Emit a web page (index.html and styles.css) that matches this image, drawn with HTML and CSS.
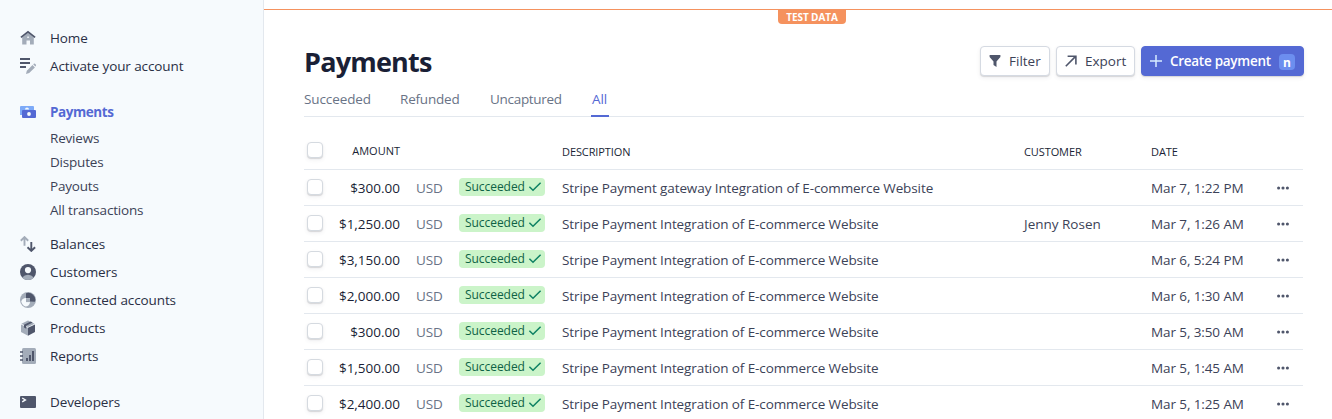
FILE: index.html
```html
<!DOCTYPE html>
<html lang="en">
<head>
<meta charset="utf-8">
<title>Payments</title>
<link rel="stylesheet" href="styles.css">
</head>
<body>
<svg class="defs" width="0" height="0">
  <symbol id="check" viewBox="0 0 14 10"><path d="M1.400 4.800 5 8.300 12.600 .8" fill="none" stroke="#0e8163" stroke-width="1.500"/></symbol>
  <symbol id="dots" viewBox="0 0 12 4"><g fill="#4f566b"><circle cx="1.6" cy="2" r="1.55"/><circle cx="6" cy="2" r="1.55"/><circle cx="10.4" cy="2" r="1.55"/></g></symbol>
</svg>
<div class="app">
  <nav class="sidebar">
    <a class="item"><svg viewBox="0 0 16 16"><path d="M2.200 7.200 8 2.600l5.800 4.600V14.500H10V10.500H6.500V14.500H2.200z" fill="#a3acb9"/><path d="M.9 7.400 8 1.900l7.100 5.500" fill="none" stroke="#4f566b" stroke-width="1.700"/><path d="M7.300 6.500h1.500v1.600H7.300z" fill="#f6fafd"/></svg><span>Home</span></a>
    <a class="item"><svg viewBox="0 0 16 16"><path d="M0 0h10v2H0zM0 4h10v2H0zM0 8h6v2H0z" fill="#4f566b"/><path d="M6 16l.8-3.300L12.500 7l2.400 2.400-5.700 5.700zM13.200 6.300l.6-.6q.6-.4 1.200.1l.8.800q.5.600 0 1.300l-.5.600z" fill="#a3acb9"/></svg><span>Activate your account</span></a>
    <a class="item active"><svg viewBox="0 0 16 16"><path d="M0 3q0-1 1-1h12q1 0 1 1v8H0z" fill="#7daaf8"/><path d="M5 5.500a2 2 0 0 1 4 0z" fill="#f6fafd"/><rect x="2" y="6" width="14" height="8" rx="1" fill="#5469d4"/><circle cx="9" cy="10" r="1.900" fill="#f6fafd"/></svg><span>Payments</span></a>
    <div class="sub">
      <a>Reviews</a><a>Disputes</a><a>Payouts</a><a>All transactions</a>
    </div>
    <a class="item"><svg viewBox="0 0 16 16"><path d="M4.500 9.800V1.500M.8 4.700l3.700-3.600 3.700 3.600" fill="none" stroke="#a3acb9" stroke-width="1.900"/><path d="M11.300 6v8.500M7.500 11.300l3.800 3.600 3.800-3.600" fill="none" stroke="#4f566b" stroke-width="1.900"/></svg><span>Balances</span></a>
    <a class="item"><svg viewBox="0 0 16 16"><circle cx="8" cy="8" r="8" fill="#4f566b"/><circle cx="8" cy="6.100" r="3.100" fill="#f6fafd"/><path d="M2.100 13.400Q4.500 10.800 8 10.800t5.900 2.600A8 8 0 0 1 2.100 13.400z" fill="#a3acb9"/></svg><span>Customers</span></a>
    <a class="item"><svg viewBox="0 0 16 16"><circle cx="8" cy="8" r="8" fill="#a3acb9"/><path d="M6 6h4v4.500q-1 4-4.500 4A6.500 6.500 0 0 1 1.300 9.500Q2 6.400 6 6z" fill="#f6fafd"/><path d="M6 6.300V1.200a7 7 0 0 1 9 8.500l-5-.1V6.300z" fill="#4f566b"/><path d="M6 6.300h4v3.800H6z" fill="#a3acb9"/></svg><span>Connected accounts</span></a>
    <a class="item"><svg viewBox="0 0 16 16"><path d="M1 4.500v7.600l7 3.700V7.800zM8 .4 1.400 3.700 8 7l6.600-3.300z" fill="#a3acb9"/><path d="M15 4.500v7.600l-7 3.700V7.800zM10.700 1.500l2 1L6.200 5.800v2.900L4 7.600V4.800z" fill="#4f566b"/></svg><span>Products</span></a>
    <a class="item"><svg viewBox="0 0 16 16"><rect x="2" width="14" height="16" rx="1.500" fill="#a3acb9"/><path d="M0 4h3M0 8h3M0 12h3" stroke="#4f566b" stroke-width="1.600"/><path d="M7 10v3M10 7v6M13 3v10" stroke="#4f566b" stroke-width="2"/></svg><span>Reports</span></a>
    <a class="item dev"><svg viewBox="0 0 16 16"><rect y="2" width="16" height="12" rx="1" fill="#4f566b"/><path d="M2.200 4l3.200 1.900-3.200 1.900" fill="none" stroke="#f6fafd" stroke-width="1.400"/></svg><span>Developers</span></a>
  </nav>
  <main class="main">
    <div class="testbar"><span class="testtag">TEST DATA</span></div>
    <header class="head">
      <h1>Payments</h1>
      <div class="actions">
        <button class="btn filter"><svg width="12" height="12" viewBox="0 0 12 12"><path d="M.6 0h10.800v2L7.500 6.500V12L4.500 10V6.500L.6 2z" fill="#4f566b"/></svg><span>Filter</span></button>
        <button class="btn export"><svg width="12" height="12" viewBox="0 0 12 12"><path d="M.8 11.200 10.600 1.400M2.600 1.200h8.300v8.200" fill="none" stroke="#4f566b" stroke-width="1.600"/></svg><span>Export</span></button>
        <button class="btn create"><svg width="12" height="12" viewBox="0 0 12 12"><path d="M6 0v12M0 6h12" stroke="#d6ecff" stroke-width="1.500"/></svg><span>Create payment</span><kbd>n</kbd></button>
      </div>
    </header>
    <div class="tabs"><a class="tab suc">Succeeded</a><a class="tab ref">Refunded</a><a class="tab unc">Uncaptured</a><a class="tab on">All</a></div>
    <section class="table">
      <div class="row th"><i class="box"></i><span class="amt">AMOUNT</span><span></span><span></span><span>DESCRIPTION</span><span>CUSTOMER</span><span>DATE</span><span></span></div>
      <div class="row"><i class="box"></i><b class="amt">$300.00</b><span class="cur">USD</span><span class="badge">Succeeded<svg><use href="#check"/></svg></span><span class="desc">Stripe Payment gateway Integration of E-commerce Website</span><span></span><span>Mar 7, 1:22 PM</span><svg class="dots"><use href="#dots"/></svg></div>
      <div class="row"><i class="box"></i><b class="amt">$1,250.00</b><span class="cur">USD</span><span class="badge">Succeeded<svg><use href="#check"/></svg></span><span class="desc">Stripe Payment Integration of E-commerce Website</span><span class="name">Jenny Rosen</span><span>Mar 7, 1:26 AM</span><svg class="dots"><use href="#dots"/></svg></div>
      <div class="row"><i class="box"></i><b class="amt">$3,150.00</b><span class="cur">USD</span><span class="badge">Succeeded<svg><use href="#check"/></svg></span><span class="desc">Stripe Payment Integration of E-commerce Website</span><span></span><span>Mar 6, 5:24 PM</span><svg class="dots"><use href="#dots"/></svg></div>
      <div class="row"><i class="box"></i><b class="amt">$2,000.00</b><span class="cur">USD</span><span class="badge">Succeeded<svg><use href="#check"/></svg></span><span class="desc">Stripe Payment Integration of E-commerce Website</span><span></span><span>Mar 6, 1:30 AM</span><svg class="dots"><use href="#dots"/></svg></div>
      <div class="row"><i class="box"></i><b class="amt">$300.00</b><span class="cur">USD</span><span class="badge">Succeeded<svg><use href="#check"/></svg></span><span class="desc">Stripe Payment Integration of E-commerce Website</span><span></span><span>Mar 5, 3:50 AM</span><svg class="dots"><use href="#dots"/></svg></div>
      <div class="row"><i class="box"></i><b class="amt">$1,500.00</b><span class="cur">USD</span><span class="badge">Succeeded<svg><use href="#check"/></svg></span><span class="desc">Stripe Payment Integration of E-commerce Website</span><span></span><span>Mar 5, 1:45 AM</span><svg class="dots"><use href="#dots"/></svg></div>
      <div class="row"><i class="box"></i><b class="amt">$2,400.00</b><span class="cur">USD</span><span class="badge">Succeeded<svg><use href="#check"/></svg></span><span class="desc">Stripe Payment Integration of E-commerce Website</span><span></span><span>Mar 5, 1:25 AM</span><svg class="dots"><use href="#dots"/></svg></div>
    </section>
  </main>
</div>
</body>
</html>
```
FILE: styles.css
```css
* { box-sizing: border-box; }
body { margin: 0; background: #fff; color: #3c4257; font: 13.5px/20px "Open Sans", "Noto Sans", sans-serif; letter-spacing: -.1px; overflow: hidden; }
.defs { display: block; }
.app { display: flex; height: 419px; }
.sidebar { width: 264px; flex: none; padding: 24px 20px 0; background: #f6fafd; border-right: 1px solid #e3e8ee; overflow: hidden; }
.item { display: flex; align-items: center; gap: 14px; height: 28px; color: #2a2f45; }
.item svg { width: 16px; height: 16px; flex: none; }
.item.active { margin-top: 18px; color: #5469d4; font-weight: 700; letter-spacing: -.45px; }
.item.dev { margin-top: 18px; }
.sub { display: flex; flex-direction: column; padding: 0 0 8px 30px; }
.sub a { height: 24px; line-height: 24px; letter-spacing: -.2px; }
.main { flex: 1; height: 419px; overflow: hidden; }
.testbar { height: 24px; margin-top: 9px; border-top: 1px solid #f5925e; display: flex; justify-content: center; align-items: flex-start; padding-left: 28px; }
.testtag { width: 68px; height: 14px; border-radius: 0 0 4px 4px; background: #f5925e; color: #fff; font-size: 10px; line-height: 15px; font-weight: 700; text-align: center; }
.head { display: flex; justify-content: space-between; align-items: flex-start; margin: 13px 28px 0 40px; height: 40px; }
h1 { margin: 0; font-size: 27px; line-height: 32px; font-weight: 700; letter-spacing: -.8px; color: #1a1f36; }
.actions { display: flex; gap: 6px; }
.btn { display: flex; align-items: center; height: 30px; padding: 0 0 0 8px; gap: 8px; border: 1px solid #d5dae2; border-radius: 4px; background: #fff; color: #3c4257; font: 500 13.5px/28px "Open Sans", sans-serif; box-shadow: 0 1px 1px rgba(0,0,0,.12), 0 2px 4px rgba(60,66,87,.08); white-space: nowrap; }
.filter { width: 70px; }
.export { width: 79px; }
.create { width: 163px; padding-left: 8px; background: #5469d4; border-color: #5469d4; color: #fff; font-weight: 600; letter-spacing: -.28px; }
kbd { width: 16px; height: 16px; border-radius: 4px; background: #6c8eef; font: 700 12px/18px "Open Sans", sans-serif; text-align: center; margin-top: 1px; }
.tabs { display: flex; margin: 0 28px 0 40px; height: 31px; border-bottom: 1px solid #e3e8ee; font-weight: 500; color: #697386; }
.tab { height: 31px; padding-top: 3px; white-space: nowrap; }
.suc { width: 96px; }
.ref { width: 90px; letter-spacing: -.2px; }
.unc { width: 101px; letter-spacing: -.3px; }
.tab.on { width: 18px; padding-left: 1px; color: #5469d4; border-bottom: 2px solid #5469d4; }
.table { margin: 0 29px 0 40px; }
.row { display: grid; grid-template-columns: 27px 69px 59px 103px 462px 127px 126px 1fr; align-items: center; height: 36px; border-bottom: 1px solid #e3e8ee; white-space: nowrap; }
.th { height: 53px; font-size: 11px; color: #1a1f36; padding-top: 17px; }
.box { width: 16px; height: 16px; margin: 0 0 1px 3px; border: 1px solid #d5dae0; border-radius: 4px; background: #fff; box-shadow: 0 1px 1px rgba(0,0,0,.12), 0 2px 4px rgba(60,66,87,.08); }
.th .box { margin-bottom: 3px; }
.amt { justify-self: end; font-weight: 500; color: #1a1f36; letter-spacing: 0; }
.th .amt { font-weight: 400; margin-bottom: 2px; }
.cur { padding-left: 16px; color: #697386; }
.name { letter-spacing: 0; }
.badge { display: flex; align-items: center; gap: 3px; width: 86px; height: 18px; margin-bottom: 1px; padding-left: 6px; border-radius: 4px; background: #cbf4c9; color: #0e6245; font-size: 12px; font-weight: 500; line-height: 18px; letter-spacing: -.05px; }
.badge svg { width: 14px; height: 10px; flex: none; }
.dots { width: 12px; height: 4px; }
```
